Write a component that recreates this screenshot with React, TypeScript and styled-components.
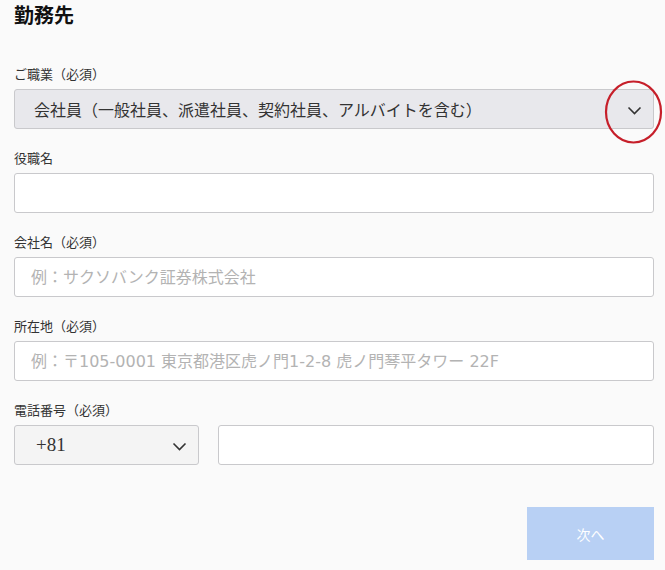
import React from "react";
import styled, { createGlobalStyle } from "styled-components";

const GlobalStyle = createGlobalStyle`
  html, body {
    margin: 0;
    padding: 0;
    background: #fafafa;
  }
  body {
    font-family: "Noto Sans CJK JP", "Noto Sans", sans-serif;
    color: #333;
  }
`;

const Chevron: React.FC = () => (
  <svg width="15" height="9" viewBox="0 0 15 9" fill="none">
    <polyline points="1.5,1.5 7.5,7.5 13.5,1.5" stroke="#333" strokeWidth="1.6" />
  </svg>
);

const App: React.FC = () => {
  return (
    <>
      <GlobalStyle />
      <Page>
        <Title>勤務先</Title>
        <Form>
          <Field>
            <Label>ご職業（必須）</Label>
            <SelectWrap>
              <SelectBox $tone="grey">
                <SelectText>会社員（一般社員、派遣社員、契約社員、アルバイトを含む）</SelectText>
                <ChevronSlot>
                  <Chevron />
                </ChevronSlot>
              </SelectBox>
              <Marker width="60" height="66" viewBox="0 0 60 66">
                <ellipse cx="29.5" cy="32" rx="27.5" ry="30.5" stroke="#c61f2a" strokeWidth="2.2" fill="none" />
              </Marker>
            </SelectWrap>
          </Field>
          <Field>
            <Label>役職名</Label>
            <Input />
          </Field>
          <Field>
            <Label>会社名（必須）</Label>
            <Input placeholder="例：サクソバンク証券株式会社" />
          </Field>
          <Field>
            <Label>所在地（必須）</Label>
            <Input placeholder="例：〒105-0001 東京都港区虎ノ門1-2-8 虎ノ門琴平タワー 22F" />
          </Field>
          <Field>
            <Label>電話番号（必須）</Label>
            <PhoneRow>
              <SelectBox $tone="light">
                <CodeText>+81</CodeText>
                <ChevronSlot>
                  <Chevron />
                </ChevronSlot>
              </SelectBox>
              <Input />
            </PhoneRow>
          </Field>
        </Form>
        <Actions>
          <NextButton disabled>次へ</NextButton>
        </Actions>
      </Page>
    </>
  );
};

export default App;

const Page = styled.div`
  width: 665px;
  box-sizing: border-box;
  padding: 0 11px 0 14px;
`;

const Title = styled.h2`
  margin: 0;
  font-size: 20px;
  line-height: 30px;
  font-weight: 700;
  color: #111;
`;

const Form = styled.div`
  margin-top: 35px;
  display: flex;
  flex-direction: column;
  gap: 20px;
`;

const Field = styled.div`
  display: flex;
  flex-direction: column;
`;

const Label = styled.label`
  font-size: 13px;
  line-height: 18px;
  margin-bottom: 6px;
  color: #333;
`;

const SelectWrap = styled.div`
  position: relative;
`;

const SelectBox = styled.div<{ $tone: "grey" | "light" }>`
  height: 40px;
  box-sizing: border-box;
  border: 1px solid #c9c9cc;
  border-radius: 3px;
  background: ${(p) => (p.$tone === "grey" ? "#e8e8ec" : "#f4f4f4")};
  display: flex;
  align-items: center;
  justify-content: space-between;
  padding: 0 11px 0 19px;
`;

const SelectText = styled.span`
  font-size: 16px;
  color: #333;
  white-space: nowrap;
`;

const CodeText = styled.span`
  font-family: "Liberation Serif", serif;
  font-size: 19px;
  color: #333;
  padding-left: 2px;
`;

const ChevronSlot = styled.span`
  display: flex;
  align-items: center;
  padding-top: 3px;
`;

const Marker = styled.svg`
  position: absolute;
  left: 590px;
  top: -9px;
  pointer-events: none;
`;

const Input = styled.input`
  height: 40px;
  width: 100%;
  box-sizing: border-box;
  border: 1px solid #c9c9cc;
  border-radius: 3px;
  background: #fff;
  padding: 0 16px;
  font-family: "DejaVu Sans", "Noto Sans CJK JP", sans-serif;
  font-size: 16px;
  color: #333;
  outline: none;

  &::placeholder {
    color: #b3b3b3;
  }
`;

const PhoneRow = styled.div`
  display: grid;
  grid-template-columns: 185px 1fr;
  gap: 19px;
`;

const Actions = styled.div`
  display: flex;
  justify-content: flex-end;
  margin-top: 42px;
`;

const NextButton = styled.button`
  width: 127px;
  height: 53px;
  border: none;
  background: #b8d0f4;
  color: #fff;
  font-family: "Noto Sans CJK JP", "Noto Sans", sans-serif;
  font-size: 14px;
  cursor: default;
`;
